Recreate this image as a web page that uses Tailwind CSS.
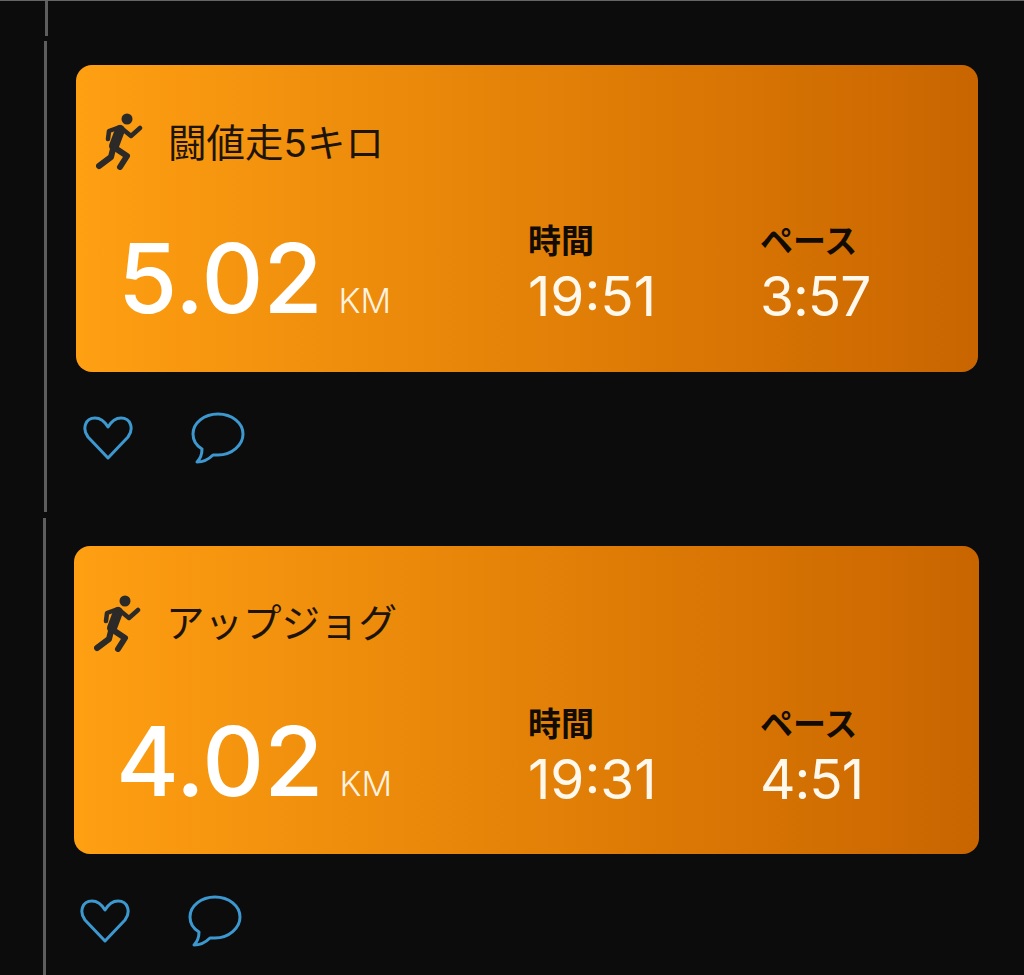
<!doctype html>
<html lang="ja">
<head>
<meta charset="utf-8">
<script src="https://cdn.jsdelivr.net/npm/@tailwindcss/browser@4"></script>
</head>
<body class="m-0">
<div class="flex h-[975px] w-[1024px] overflow-hidden border-t border-[#666] bg-[#0c0c0d] font-['Inter','Noto_Sans_CJK_JP',sans-serif]">
  <div class="flex w-[74px] shrink-0 flex-col pl-[44px]">
    <div class="ml-[1px] h-[35px] w-[3px] bg-[#5e5e5e]"></div>
    <div class="mt-[5px] h-[474px] w-[3px] bg-[#5e5e5e]"></div>
    <div class="-ml-[1px] mt-[6px] h-[460px] w-[3px] bg-[#5e5e5e]"></div>
  </div>
  <div class="flex flex-col pt-[64px]">
    <div class="ml-[2px] flex h-[307px] w-[902px] flex-col rounded-[16px] bg-gradient-to-r from-[#ff9f12] to-[#c96500] pl-[20px] pt-[48px]">
      <div class="flex h-[57px] items-center gap-[25px]">
        <svg width="47" height="57" viewBox="26 53 47 57" fill="none" stroke="#2b2a28" stroke-linecap="round" stroke-linejoin="round"><circle cx="57" cy="59" r="5.5" fill="#2b2a28" stroke="none"/><path d="M50 70 44 86" stroke-width="10"/><path d="M38 79 39 71 50 67 61 76 70 68" stroke-width="4.5"/><path d="M43 89 41 97 29 106" stroke-width="6"/><path d="M45 88 57 96 50 107" stroke-width="6"/></svg>
        <span class="mt-[3px] text-[38.5px] leading-[57px] font-normal text-[#1e1406]">闘値走5キロ</span>
      </div>
      <div class="mt-[51px] grid grid-cols-[432px_232px_1fr] items-end">
        <div class="pl-[22px]"><span class="text-[96px] leading-[92px] font-medium text-white">5.02</span><span class="ml-[16px] text-[34px] font-light text-[#fff3e0]">KM</span></div>
        <div><div class="mb-[5px] text-[33px] leading-[40px] font-bold text-[#120b02]">時間</div><div class="text-[55px] leading-[60px] font-normal text-[#fff8ec]">19:51</div></div>
        <div><div class="mb-[5px] text-[33px] leading-[40px] font-bold text-[#120b02]">ペース</div><div class="text-[55px] leading-[60px] font-normal tracking-[-1px] text-[#fff8ec]">3:57</div></div>
      </div>
    </div>
    <div class="ml-[9px] mt-[40px] flex h-[51px] items-center gap-[58px]">
      <svg width="50" height="44" viewBox="0 0 50 44" fill="none" stroke="#3d98cf" stroke-width="3" stroke-linejoin="round"><path d="M25 42 5 21C-1 13 2 2 12 2 18 2 22 6 25 11 28 6 32 2 38 2 48 2 51 13 45 21Z"/></svg>
      <svg width="54" height="52" viewBox="0 0 54 52" fill="none" stroke="#3d98cf" stroke-width="3" stroke-linejoin="round"><path d="M27 2C13 2 2 11 2 22 2 29 6 34 11 37 11 42 9 47 6 50 12 50 18 47 22 43 24 43 26 43 27 43 41 43 52 33 52 22 52 11 41 2 27 2Z"/></svg>
    </div>
    <div class="mt-[83px] flex h-[308px] w-[905px] flex-col rounded-[16px] bg-gradient-to-r from-[#ff9f12] to-[#c96500] pl-[20px] pt-[49px]">
      <div class="flex h-[57px] items-center gap-[25px]">
        <svg width="47" height="57" viewBox="26 53 47 57" fill="none" stroke="#2b2a28" stroke-linecap="round" stroke-linejoin="round"><circle cx="57" cy="59" r="5.5" fill="#2b2a28" stroke="none"/><path d="M50 70 44 86" stroke-width="10"/><path d="M38 79 39 71 50 67 61 76 70 68" stroke-width="4.5"/><path d="M43 89 41 97 29 106" stroke-width="6"/><path d="M45 88 57 96 50 107" stroke-width="6"/></svg>
        <span class="text-[38.5px] leading-[57px] font-normal text-[#1e1406]">アップジョグ</span>
      </div>
      <div class="mt-[52px] grid grid-cols-[434px_232px_1fr] items-end">
        <div class="pl-[22px]"><span class="text-[96px] leading-[92px] font-medium text-white">4.02</span><span class="ml-[16px] text-[34px] font-light text-[#fff3e0]">KM</span></div>
        <div><div class="mb-[5px] text-[33px] leading-[40px] font-bold text-[#120b02]">時間</div><div class="text-[55px] leading-[60px] font-normal text-[#fff8ec]">19:31</div></div>
        <div><div class="mb-[5px] text-[33px] leading-[40px] font-bold text-[#120b02]">ペース</div><div class="text-[55px] leading-[60px] font-normal tracking-[-1px] text-[#fff8ec]">4:51</div></div>
      </div>
    </div>
    <div class="ml-[6px] mt-[41px] flex h-[52px] items-center gap-[58px]">
      <svg width="50" height="44" viewBox="0 0 50 44" fill="none" stroke="#3d98cf" stroke-width="3" stroke-linejoin="round"><path d="M25 42 5 21C-1 13 2 2 12 2 18 2 22 6 25 11 28 6 32 2 38 2 48 2 51 13 45 21Z"/></svg>
      <svg width="54" height="52" viewBox="0 0 54 52" fill="none" stroke="#3d98cf" stroke-width="3" stroke-linejoin="round"><path d="M27 2C13 2 2 11 2 22 2 29 6 34 11 37 11 42 9 47 6 50 12 50 18 47 22 43 24 43 26 43 27 43 41 43 52 33 52 22 52 11 41 2 27 2Z"/></svg>
    </div>
  </div>
</div>
</body>
</html>
